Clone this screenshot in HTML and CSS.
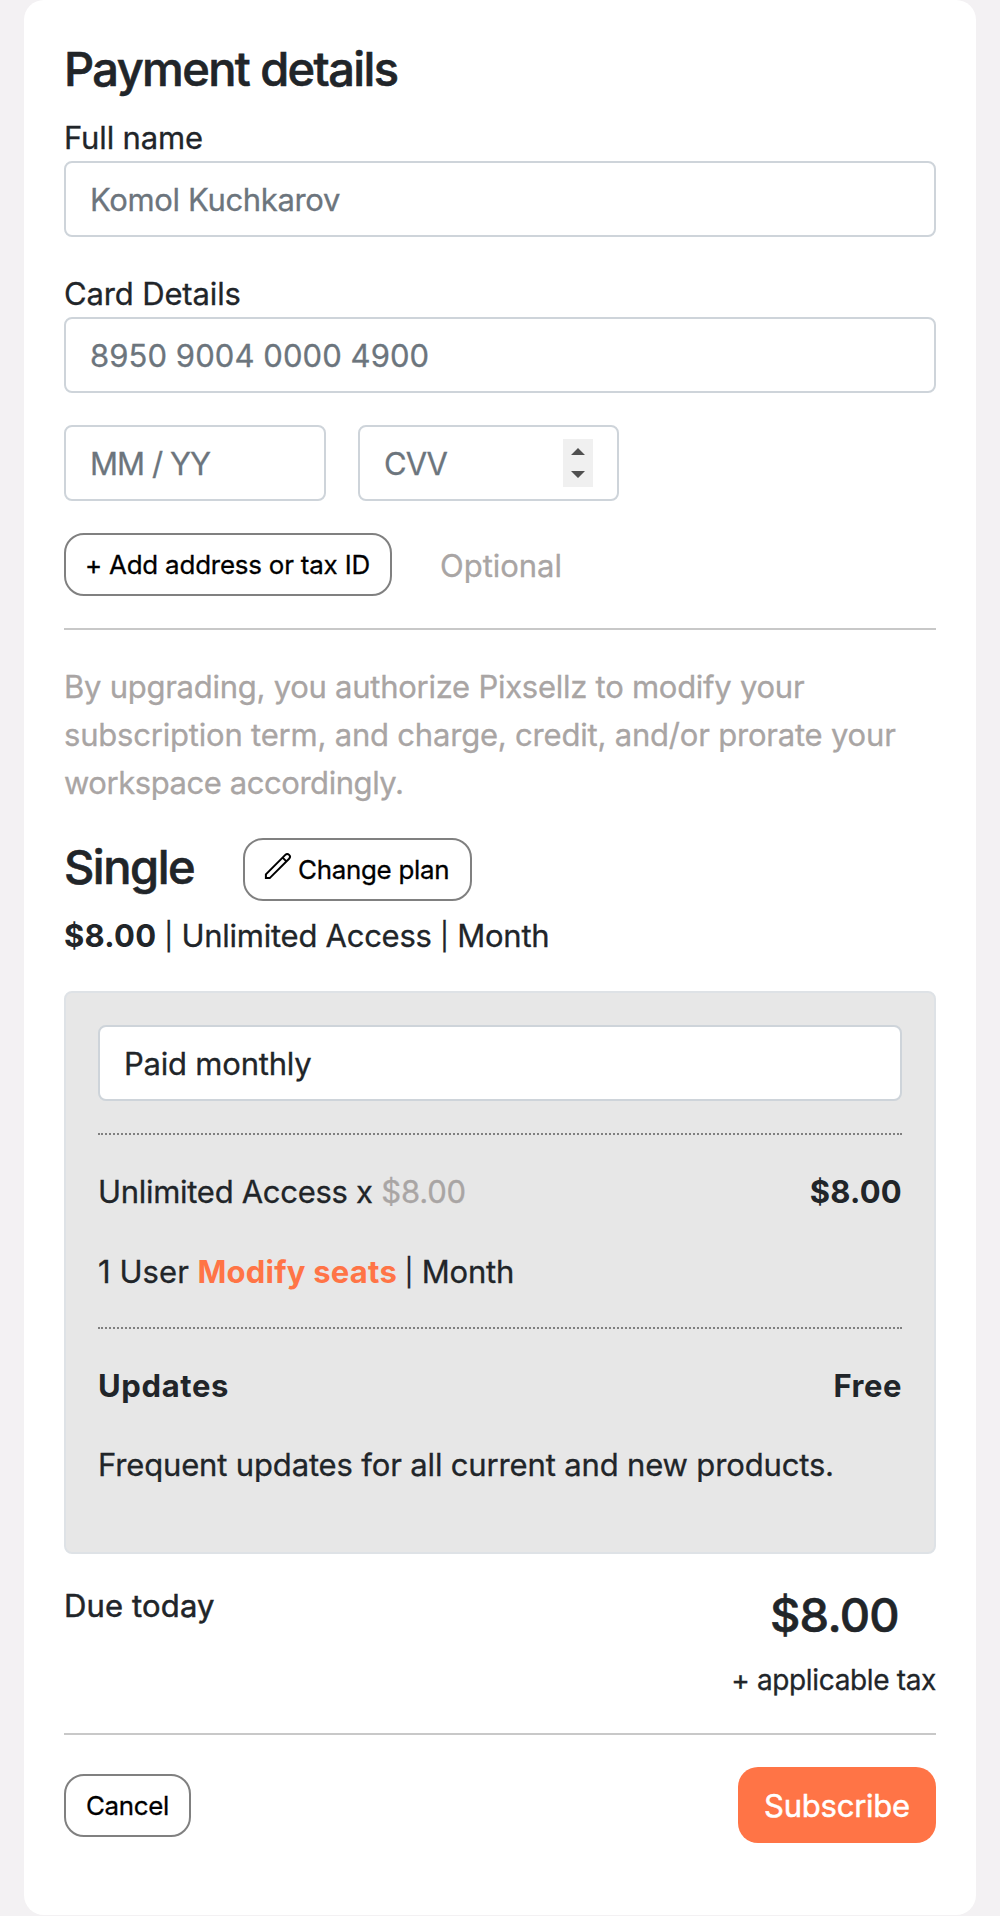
FILE: index.html
```
<!DOCTYPE html>
<html lang="en">
<head>
<meta charset="utf-8">
<title>Payment details</title>
<link rel="stylesheet" href="styles.css">
</head>
<body>
<main class="card">
  <h1 class="heading">Payment details</h1>

  <label class="label label-name" for="name">Full name</label>
  <input class="field field-name" id="name" type="text" placeholder="Komol Kuchkarov">

  <label class="label label-card" for="card">Card Details</label>
  <input class="field field-card" id="card" type="text" placeholder="8950 9004 0000 4900">

  <div class="short-fields">
    <input class="field field-date" type="text" placeholder="MM / YY" aria-label="Expiry date">
    <div class="field field-cvv">
      <span class="cvv">CVV</span>
      <span class="spinner">
        <svg width="30" height="48" viewBox="0 0 30 48"><path d="M8 16 15 9l7 7zM8 32h14l-7 7z" fill="#505050"/></svg>
      </span>
    </div>
  </div>

  <div class="address">
    <button class="btn-outline btn-address" type="button">+ Add address or tax ID</button>
    <span class="optional">Optional</span>
  </div>

  <hr class="rule">

  <p class="terms">
    <span class="terms-a">By upgrading, you authorize Pixsellz to modify your</span><br>
    <span class="terms-b">subscription term, and charge, credit, and/or prorate your</span><br>
    <span class="terms-c">workspace accordingly.</span>
  </p>

  <div class="plan">
    <h2 class="plan-name">Single</h2>
    <button class="btn-outline btn-plan" type="button">
      <svg class="pencil" width="28" height="28" viewBox="0 0 28 28" fill="none" stroke="#000" stroke-width="2"><path d="M1.9 26.1V22.3L21.3 2.9A2.67 2.67 0 0 1 25.1 6.7L5.7 26.1ZM18.6 5.6l3.8 3.8"/></svg>
      <span>Change plan</span>
    </button>
  </div>
  <p class="price-line"><b class="amount">$8.00</b><span class="plan-info"><span class="bar">|</span> Unlimited Access <span class="bar">|</span> Month</span></p>

  <section class="summary">
    <div class="field period">Paid monthly</div>
    <hr class="dots">
    <div class="line">
      <span><span class="access">Unlimited Access x</span><span class="unit-price">$8.00</span></span>
      <b class="amount">$8.00</b>
    </div>
    <div class="line seats"><span><span class="users">1 User</span><a class="modify">Modify seats</a><span class="month"><span class="bar">|</span> Month</span></span></div>
    <hr class="dots dots-second">
    <div class="line"><b class="updates">Updates</b><b class="free">Free</b></div>
    <p class="note">Frequent updates for all current and new products.</p>
  </section>

  <div class="due">
    <span class="due-label">Due today</span>
    <div class="due-total">
      <span class="total">$8.00</span>
      <span class="tax">+ applicable tax</span>
    </div>
  </div>

  <hr class="rule">

  <div class="actions">
    <button class="btn-outline btn-cancel" type="button">Cancel</button>
    <button class="btn-primary" type="button">Subscribe</button>
  </div>
</main>
</body>
</html>
```
FILE: styles.css
```
* { box-sizing: border-box; }

body {
  margin: 0;
  background: #f3f1f3;
  color: #212529;
  font: 400 31px/48px Inter, "Liberation Sans", sans-serif;
  -webkit-text-stroke: 0.3px;
}

h1, h2, p, hr { margin: 0; }
hr { border: 0; }
button, input { font-family: inherit; font-weight: inherit; white-space: nowrap; }
b { font-weight: 700; }

.card {
  display: flex;
  flex-direction: column;
  width: 952px;
  height: 1915px;
  margin: 0 auto;
  padding: 40px 40px 0;
  border-radius: 20px;
  background: #fff;
}

.heading, .plan-name, .total {
  font-size: 47px;
  font-weight: 500;
  line-height: 58px;
  -webkit-text-stroke: 0.6px;
}
.heading { letter-spacing: -1.62px; }

.label { line-height: 47px; }
.label-name { margin-top: 16px; letter-spacing: -0.15px; }
.label-card { margin-top: 33px; letter-spacing: -0.14px; }

.field {
  width: 100%;
  height: 76px;
  padding: 0 24px;
  border: 2px solid #ced4da;
  border-radius: 8px;
  background: #fff;
  color: #212529;
  font-size: 31px;
  outline: none;
}
.field::placeholder { color: #6c757d; opacity: 1; }
.field-name { letter-spacing: -0.35px; }
.field-card { letter-spacing: 0.07px; }

.short-fields { display: flex; gap: 32px; margin-top: 32px; }
.short-fields .field { width: 262px; }
.field-date { letter-spacing: -0.93px; }
.short-fields .field-cvv {
  display: flex;
  align-items: center;
  justify-content: space-between;
  width: 261px;
  padding-left: 24px;
  color: #6c757d;
}
.cvv { padding-top: 2px; letter-spacing: -0.99px; }
.spinner { display: flex; width: 30px; height: 48px; background: #f0f0f0; }

.address { display: flex; align-items: center; margin-top: 32px; }
.optional { margin-left: 48px; padding-top: 2px; color: #a9a5a4; letter-spacing: -0.02px; }

.btn-outline {
  display: flex;
  align-items: center;
  height: 63px;
  padding: 0 0 0 19px;
  border: 2px solid #808080;
  border-radius: 20px;
  background: #fff;
  color: #000;
  font-size: 25.9px;
  line-height: 40px;
}
.btn-address { width: 328px; letter-spacing: -0.19px; }
.btn-plan { width: 229px; gap: 6px; letter-spacing: -0.27px; }
.btn-cancel { width: 127px; padding: 2px 0 0 20px; letter-spacing: -0.33px; }

.rule { height: 2px; margin-top: 32px; background: #c8c8c8; flex: none; }

.terms { margin-top: 33px; color: #a9a5a4; }
.terms-a { letter-spacing: -0.26px; }
.terms-b { letter-spacing: -0.2px; }
.terms-c { letter-spacing: -0.44px; }

.plan { display: flex; gap: 49px; margin-top: 31px; }
.plan-name { width: 130px; letter-spacing: -1.49px; }
.pencil { flex: none; margin-bottom: 7px; }
.price-line { height: 48px; margin-top: 11px; }
.amount { letter-spacing: 0.25px; }
.plan-info { margin-left: 8px; letter-spacing: -0.26px; }
.bar { position: relative; top: -1px; font-size: 27px; line-height: 1; }

.summary {
  height: 563px;
  margin-top: 31px;
  padding: 32px;
  border: 2px solid #dee2e6;
  border-radius: 8px;
  background: #e7e7e7;
}
.period { padding-top: 13px; letter-spacing: -0.21px; }
.dots { height: 2px; margin: 32px 0 33px; border-top: 2px dotted #808080; }
.dots-second { margin-top: 31px; }
.line { display: flex; justify-content: space-between; height: 48px; }
.seats { margin-top: 32px; }
.access { letter-spacing: -0.29px; }
.unit-price { margin-left: 8.5px; color: #a9a5a4; letter-spacing: -0.2px; }
.users { letter-spacing: 0.07px; }
.modify { margin-left: 8.5px; color: #ff7446; font-weight: 700; letter-spacing: 0.23px; }
.month { margin-left: 7.5px; letter-spacing: -0.2px; }
.updates { letter-spacing: 0.62px; }
.free { letter-spacing: 0.53px; }
.updates, .free, .amount, .modify { -webkit-text-stroke: 0; }
.note { margin-top: 31px; letter-spacing: -0.15px; }

.due { display: flex; justify-content: space-between; margin-top: 28px; }
.due-label { letter-spacing: 0.15px; -webkit-text-stroke: 0.5px; }
.due-total { display: flex; flex-direction: column; align-items: flex-end; padding-top: 4px; }
.total { margin-right: 37px; letter-spacing: -0.7px; }
.tax { margin-top: 15px; font-size: 28px; line-height: 42px; letter-spacing: -0.35px; }

.actions { display: flex; align-items: center; justify-content: space-between; margin-top: 32px; }
.btn-primary {
  width: 198px;
  height: 76px;
  padding: 0;
  border: 0;
  border-radius: 20px;
  background: #ff7446;
  color: #fff;
  font-size: 31px;
  letter-spacing: -0.24px;
  -webkit-text-stroke: 0.5px;
}
```
